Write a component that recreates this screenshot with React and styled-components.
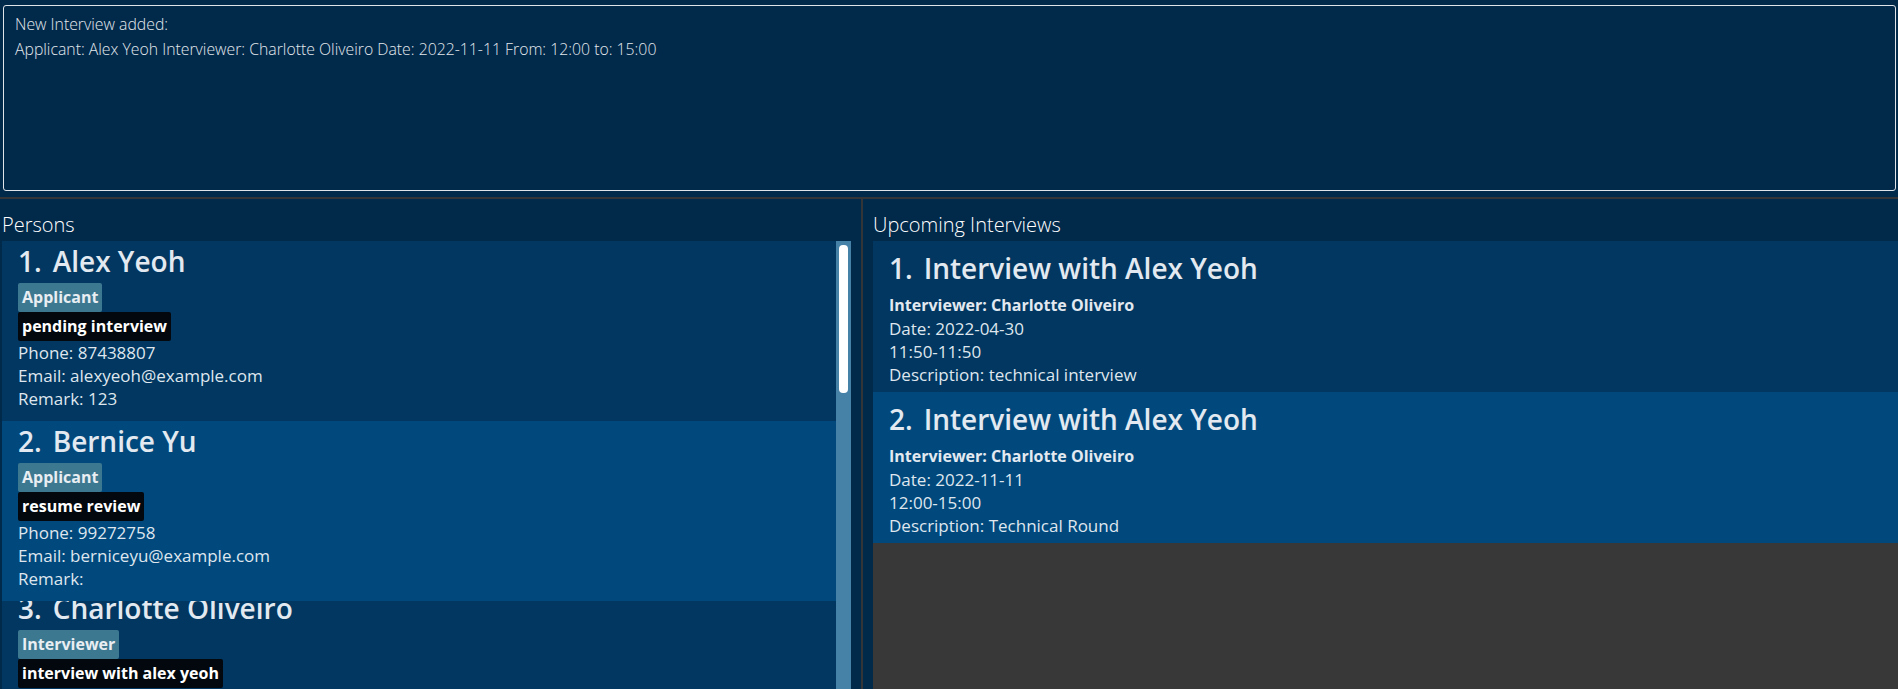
import React from "react";
import styled, { createGlobalStyle } from "styled-components";

const GlobalStyle = createGlobalStyle`
  html, body {
    margin: 0;
    padding: 0;
    background: #01294a;
    overflow: hidden;
  }
  body {
    font-family: "Open Sans", "Noto Sans", "Liberation Sans", sans-serif;
    color: #e1e8ef;
  }
`;

const Root = styled.div`
  height: 100vh;
  display: flex;
  flex-direction: column;
  background: #01294a;
  overflow: hidden;
`;

const ResultBox = styled.div`
  box-sizing: border-box;
  height: 186px;
  margin: 5px 2px 0 3px;
  border: 1px solid #dfe4e9;
  border-radius: 3px;
  background: #01294a;
  padding: 6px 11px;
  font-size: 15.8px;
  font-weight: 300;
  line-height: 25px;
  color: #e3e8ed;
  flex-shrink: 0;
`;

const ResultLine = styled.div`
  white-space: pre;
`;

const Panes = styled.div`
  flex: 1;
  min-height: 0;
  display: flex;
  margin-top: 6px;
  border-top: 2px solid #333536;
`;

const Pane = styled.section`
  box-sizing: border-box;
  display: flex;
  flex-direction: column;
  min-height: 0;
  ${(p) =>
    p.$left
      ? `width: 863px; padding: 0 10px 0 2px; border-right: 2px solid #333536;`
      : `flex: 1; padding: 0 0 0 10px;`}
`;

const PaneTitle = styled.h2`
  margin: 0;
  padding: 12px 0 2px;
  font-size: 20px;
  font-weight: 300;
  line-height: 28px;
  color: #ffffff;
  white-space: nowrap;
`;

const ListArea = styled.div`
  flex: 1;
  min-height: 0;
  display: flex;
`;

const CardList = styled.div`
  flex: 1;
  min-width: 0;
  display: flex;
  flex-direction: column;
  overflow: hidden;
`;

const ScrollTrack = styled.div`
  width: 15px;
  flex-shrink: 0;
  background: #4681a8;
  padding: 4px 3px 0;
  box-sizing: border-box;
`;

const ScrollThumb = styled.div`
  height: 148px;
  background: #ffffff;
  border-radius: 4px;
`;

const Card = styled.div`
  flex-shrink: 0;
  overflow: hidden;
  background: ${(p) => (p.$alt ? "#01497d" : "#013760")};
  height: ${(p) => p.$h}px;
  box-sizing: border-box;
`;

const CardBody = styled.div`
  padding: ${(p) => p.$pad};
  margin-top: ${(p) => p.$shift || 0}px;
`;

const NameRow = styled.div`
  display: flex;
  align-items: baseline;
  font-size: 28px;
  font-weight: 600;
  line-height: 38px;
  color: #e3e9f0;
  white-space: nowrap;
`;

const Index = styled.span`
  margin-right: 11px;
`;

const TagRow = styled.div`
  display: flex;
  margin-top: ${(p) => p.$gap || 0}px;
`;

const Tag = styled.span`
  display: inline-block;
  padding: 3px 4px;
  line-height: 23px;
  font-size: 16px;
  font-weight: 700;
  border-radius: 2px;
  color: ${(p) => (p.$role ? "#e8eef2" : "#ffffff")};
  background: ${(p) => (p.$role ? "#3d7891" : "#02080d")};
  white-space: nowrap;
`;

const Field = styled.div`
  font-size: 17px;
  line-height: 23px;
  color: #dfe6ee;
  white-space: nowrap;
`;

const BoldField = styled.div`
  margin-top: 6px;
  font-size: 16px;
  font-weight: 700;
  line-height: 24px;
  color: #e3e9f0;
  white-space: nowrap;
`;

const EmptyFill = styled.div`
  flex: 1;
  background: #383838;
`;

const persons = [
  {
    name: "Alex Yeoh",
    role: "Applicant",
    tag: "pending interview",
    phone: "87438807",
    email: "alexyeoh@example.com",
    remark: "123",
  },
  {
    name: "Bernice Yu",
    role: "Applicant",
    tag: "resume review",
    phone: "99272758",
    email: "berniceyu@example.com",
    remark: "",
  },
  {
    name: "Charlotte Oliveiro",
    role: "Interviewer",
    tag: "interview with alex yeoh",
    phone: "93210283",
    email: "charlotte@example.com",
    remark: "",
  },
];

const interviews = [
  {
    title: "Interview with Alex Yeoh",
    interviewer: "Charlotte Oliveiro",
    date: "2022-04-30",
    time: "11:50-11:50",
    desc: "technical interview",
  },
  {
    title: "Interview with Alex Yeoh",
    interviewer: "Charlotte Oliveiro",
    date: "2022-11-11",
    time: "12:00-15:00",
    desc: "Technical Round",
  },
];

function PersonCard({ p, i }) {
  return (
    <Card $alt={i % 2 === 1} $h={i === 2 ? 200 : 180}>
      <CardBody $pad="1px 16px 11px" $shift={i === 2 ? -13 : 0}>
        <NameRow>
          <Index>{i + 1}.</Index>
          <span>{p.name}</span>
        </NameRow>
        <TagRow $gap={3}>
          <Tag $role>{p.role}</Tag>
        </TagRow>
        <TagRow>
          <Tag>{p.tag}</Tag>
        </TagRow>
        <Field>Phone: {p.phone}</Field>
        <Field>Email: {p.email}</Field>
        <Field>Remark: {p.remark}</Field>
      </CardBody>
    </Card>
  );
}

function InterviewCard({ it, i }) {
  return (
    <Card $alt={i % 2 === 1} $h={151}>
      <CardBody $pad="8px 16px 6px">
        <NameRow>
          <Index>{i + 1}.</Index>
          <span>{it.title}</span>
        </NameRow>
        <BoldField>Interviewer: {it.interviewer}</BoldField>
        <Field>Date: {it.date}</Field>
        <Field>{it.time}</Field>
        <Field>Description: {it.desc}</Field>
      </CardBody>
    </Card>
  );
}

export default function App() {
  return (
    <Root>
      <GlobalStyle />
      <ResultBox>
        <ResultLine>New Interview added:</ResultLine>
        <ResultLine>
          Applicant: Alex Yeoh Interviewer: Charlotte Oliveiro Date: 2022-11-11 From: 12:00 to: 15:00
        </ResultLine>
      </ResultBox>
      <Panes>
        <Pane $left>
          <PaneTitle>Persons</PaneTitle>
          <ListArea>
            <CardList>
              {persons.map((p, i) => (
                <PersonCard key={i} p={p} i={i} />
              ))}
            </CardList>
            <ScrollTrack>
              <ScrollThumb />
            </ScrollTrack>
          </ListArea>
        </Pane>
        <Pane>
          <PaneTitle>Upcoming Interviews</PaneTitle>
          <ListArea>
            <CardList>
              {interviews.map((it, i) => (
                <InterviewCard key={i} it={it} i={i} />
              ))}
              <EmptyFill />
            </CardList>
          </ListArea>
        </Pane>
      </Panes>
    </Root>
  );
}
